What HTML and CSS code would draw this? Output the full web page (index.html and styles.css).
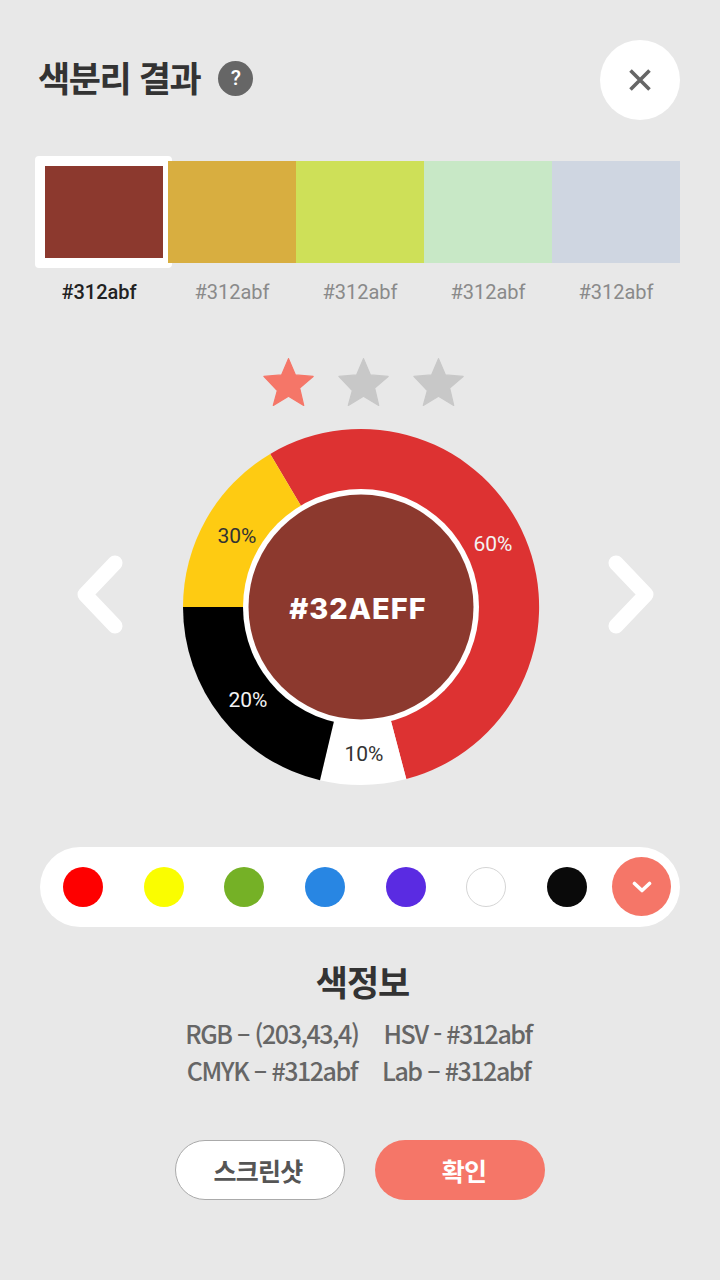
FILE: index.html
```html
<!DOCTYPE html>
<html lang="ko">
<head>
<meta charset="utf-8">
<title>색분리 결과</title>
<link rel="stylesheet" href="styles.css">
</head>
<body>
<main class="page">
  <header class="head">
    <h1 class="title">색분리 결과</h1>
    <span class="help">?</span>
    <button class="close" aria-label="닫기">
      <svg width="24" height="24" viewBox="0 0 24 24"><path class="close-x" d="M2.500 2.500 21.500 21.500M21.500 2.500 2.500 21.500"/></svg>
    </button>
  </header>

  <section class="swatches">
    <div class="swatch-col sel"><div class="swatch s1"></div><span class="hex">#312abf</span></div>
    <div class="swatch-col"><div class="swatch s2"></div><span class="hex">#312abf</span></div>
    <div class="swatch-col"><div class="swatch s3"></div><span class="hex">#312abf</span></div>
    <div class="swatch-col"><div class="swatch s4"></div><span class="hex">#312abf</span></div>
    <div class="swatch-col"><div class="swatch s5"></div><span class="hex">#312abf</span></div>
  </section>

  <section class="stars">
    <svg class="star on" viewBox="1.750 1.750 20.500 19.500"><path d="M12 17.27 18.18 21l-1.64-7.03L22 9.24l-7.19-.61L12 2 9.19 8.63 2 9.24l5.46 5.73L5.82 21z"/></svg>
    <svg class="star" viewBox="1.750 1.750 20.500 19.500"><path d="M12 17.27 18.18 21l-1.64-7.03L22 9.24l-7.19-.61L12 2 9.19 8.63 2 9.24l5.46 5.73L5.82 21z"/></svg>
    <svg class="star" viewBox="1.750 1.750 20.500 19.500"><path d="M12 17.27 18.18 21l-1.64-7.03L22 9.24l-7.19-.61L12 2 9.19 8.63 2 9.24l5.46 5.73L5.82 21z"/></svg>
  </section>

  <section class="chart-row">
    <svg class="chev" width="46" height="80" viewBox="0 0 46 80"><path d="M38 8 8 39.500 38 71"/></svg>
    <svg class="donut" width="360" height="360" viewBox="0 0 360 360">
      <path fill="#dd3232" d="M89.200 26.900A178 178 0 1 1 225.300 352.100L180 180Z"/>
      <path fill="#ffffff" d="M225.300 352.100A178 178 0 0 1 139 353.200L180 180Z"/>
      <path fill="#000000" d="M139 353.200A178 178 0 0 1 2 180H180Z"/>
      <path fill="#fecb12" d="M2 180A178 178 0 0 1 89.200 26.900L180 180Z"/>
      <circle cx="180" cy="180" r="118" fill="#ffffff"/>
      <circle cx="180" cy="180" r="112.500" fill="#8c392e"/>
      <text class="pct light" x="312" y="124">60%</text>
      <text class="pct dark" x="56" y="116">30%</text>
      <text class="pct light" x="67" y="280">20%</text>
      <text class="pct dark" x="183" y="334">10%</text>
      <text class="center-hex" x="177" y="192">#32AEFF</text>
    </svg>
    <svg class="chev" width="46" height="80" viewBox="0 0 46 80"><path d="M8 8 38 39.500 8 71"/></svg>
  </section>

  <section class="palette">
    <span class="dot d1"></span>
    <span class="dot d2"></span>
    <span class="dot d3"></span>
    <span class="dot d4"></span>
    <span class="dot d5"></span>
    <span class="dot d6"></span>
    <span class="dot d7"></span>
    <button class="more" aria-label="더보기">
      <svg width="20" height="12" viewBox="0 0 20 12"><path d="M2.500 2.500 10 9.500 17.500 2.500"/></svg>
    </button>
  </section>

  <section class="info">
    <h2 class="info-title">색정보</h2>
    <div class="info-row"><span>RGB – (203,43,4)</span><span>HSV - #312abf</span></div>
    <div class="info-row"><span>CMYK – #312abf</span><span>Lab – #312abf</span></div>
  </section>

  <section class="actions">
    <button class="btn ghost">스크린샷</button>
    <button class="btn primary">확인</button>
  </section>
</main>
</body>
</html>
```
FILE: styles.css
```css
* { box-sizing: border-box; }
html, body { margin: 0; padding: 0; }
body {
  width: 720px;
  height: 1280px;
  overflow: hidden;
  background: #e8e8e8;
  font-family: "Noto Sans CJK KR", "Noto Sans", sans-serif;
  color: #333;
}
.page { padding: 40px 40px 0; }
.head { display: flex; align-items: center; height: 80px; }
.title {
  margin: -6px 0 0 -2px;
  font-size: 35px;
  line-height: 76px;
  font-weight: 700;
  letter-spacing: -1.400px;
  color: #333;
}
.help {
  width: 35px;
  height: 35px;
  margin-left: 18px;
  margin-top: -4px;
  border-radius: 50%;
  background: #666;
  color: #fff;
  font: 500 21px/35px "Roboto", sans-serif;
  text-align: center;
}
.close {
  margin-left: auto;
  width: 80px;
  height: 80px;
  border: 0;
  padding: 0;
  border-radius: 50%;
  background: #fff;
  display: flex;
  align-items: center;
  justify-content: center;
}
.close-x { fill: none; stroke: #666; stroke-width: 3.600; }

.swatches {
  display: grid;
  grid-template-columns: repeat(5, 128px);
  margin-top: 41px;
}
.swatch-col { display: flex; flex-direction: column; align-items: center; position: relative; }
.swatch { width: 128px; height: 102px; }
.s1 { background: #8c392e; }
.s2 { background: #d8ae40; }
.s3 { background: #cee058; }
.s4 { background: #c8e8c6; }
.s5 { background: #cfd6e1; }
.sel::before {
  content: "";
  box-sizing: border-box;
  position: absolute;
  left: -5px;
  right: -4px;
  top: -5px;
  height: 112px;
  border-style: solid;
  border-color: #fff;
  border-width: 10px 9px 10px 10px;
  border-radius: 4px;
}
.hex {
  margin-top: 15px;
  font: 400 20px/28px "Roboto", sans-serif;
  color: #8a8a8a;
}
.sel .hex { color: #222; font-weight: 500; margin-right: 10px; }

.stars { display: flex; justify-content: center; gap: 24px; margin-top: 52px; margin-left: 7px; }
.star { width: 51px; height: 48px; fill: #c8c8c8; stroke: #c8c8c8; stroke-width: 0.500; stroke-linejoin: round; }
.star.on { fill: #f57668; stroke: #f57668; }

.chart-row {
  display: flex;
  align-items: center;
  margin: 21px 0 0 37px;
  height: 360px;
}
.donut { display: block; margin: 0 67px 0 58px; flex: none; }
.chev { margin-top: -24px; flex: none; }
.chev path { fill: none; stroke: #fff; stroke-width: 15; stroke-linecap: round; stroke-linejoin: round; }
.pct { font: 400 21px "Roboto", sans-serif; text-anchor: middle; }
.pct.light { fill: #f3f3f3; }
.pct.dark { fill: #333; }
.center-hex {
  font: 800 29px "Inter", "Lato", sans-serif;
  letter-spacing: 1px;
  fill: #fff;
  text-anchor: middle;
}

.palette {
  display: flex;
  align-items: center;
  gap: 40.660px;
  height: 80px;
  margin-top: 60px;
  padding-left: 23px;
  border-radius: 40px;
  background: #fff;
  position: relative;
}
.dot { width: 40px; height: 40px; border-radius: 50%; flex: none; }
.d1 { background: #fe0000; }
.d2 { background: #fafd00; }
.d3 { background: #75b126; }
.d4 { background: #2886e3; }
.d5 { background: #5a2be2; }
.d6 { background: #fff; border: 1px solid #d5d5d5; }
.d7 { background: #0a0a0a; }
.more {
  position: absolute;
  right: 9px;
  top: 10px;
  width: 59px;
  height: 59px;
  border: 0;
  padding: 0;
  border-radius: 50%;
  background: #f57668;
  display: flex;
  align-items: center;
  justify-content: center;
}
.more path { fill: none; stroke: #fff; stroke-width: 3.600; stroke-linecap: round; stroke-linejoin: round; }

.info { margin-top: 29px; text-align: center; }
.info-title {
  margin: 0 0 9px;
  padding-left: 5px;
  font-size: 35px;
  line-height: 50px;
  font-weight: 700;
  letter-spacing: -1px;
  color: #333;
}
.info-row {
  display: flex;
  justify-content: center;
  gap: 25px;
  padding-right: 3px;
  font-size: 25px;
  line-height: 37px;
  font-weight: 500;
  letter-spacing: -1.450px;
  color: #666;
}
.actions { display: flex; justify-content: center; gap: 30px; margin-top: 51px; }
.btn {
  width: 170px;
  height: 60px;
  padding: 0;
  border-radius: 30px;
  font-family: "Noto Sans CJK KR", sans-serif;
  font-size: 25px;
  font-weight: 700;
  letter-spacing: -0.800px;
}
.ghost { background: #fff; border: 1px solid #aaa; color: #555; padding-right: 4px; }
.primary { background: #f57668; border: 0; color: #fff; padding-left: 8px; }
```
